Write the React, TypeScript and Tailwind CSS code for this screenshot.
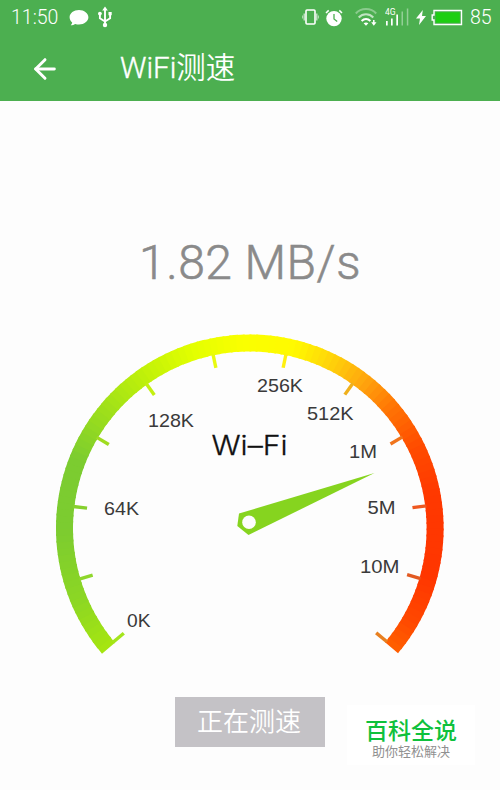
import { ArrowLeft } from 'lucide-react';

const CX = 249.8;
const CY = 528.3;
const START = 139.7;
const SWEEP = 260.4;

// [degrees along the dial, r, g, b]
const stops = [
  [0, 166, 230, 16],
  [18, 140, 214, 36],
  [40, 124, 204, 48],
  [62, 124, 204, 48],
  [76, 152, 220, 30],
  [95, 190, 240, 10],
  [112, 226, 255, 0],
  [128, 250, 255, 0],
  [144, 255, 250, 0],
  [156, 255, 212, 10],
  [168, 255, 166, 14],
  [180, 255, 116, 4],
  [194, 255, 76, 0],
  [210, 255, 56, 0],
  [235, 255, 54, 0],
  [250, 255, 72, 0],
  [261, 255, 98, 0],
];

const colorAt = (deg: number) => {
  let i = 0;
  while (i < stops.length - 2 && deg > stops[i + 1][0]) i++;
  const a = stops[i];
  const b = stops[i + 1];
  const t = Math.min(1, Math.max(0, (deg - a[0]) / (b[0] - a[0])));
  const c = [1, 2, 3].map((k) => Math.round(a[k] + (b[k] - a[k]) * t));
  return `rgb(${c.join(',')})`;
};

const point = (r: number, deg: number) => {
  const rad = ((START + deg) * Math.PI) / 180;
  return [CX + r * Math.cos(rad), CY + r * Math.sin(rad)];
};

const arc = (from: number, to: number) => {
  const [x1, y1] = point(185.3, from);
  const [x2, y2] = point(185.3, to);
  return `M${x1} ${y1}A185.3 185.3 0 0 1 ${x2} ${y2}`;
};

const segments = Array.from({ length: 130 }, (_, i) => i * (SWEEP / 130));

const tickColors = [
  '#a4e51c', '#8fd72c', '#86d02e', '#a0dc20', '#c4f010', '#e8fa10',
  '#fff010', '#efb01c', '#f0741c', '#ee5820', '#e25a22', '#e88020',
];

const labels = [
  { text: '0K', x: 127, y: 627, w: 23.5 },
  { text: '64K', x: 104, y: 515.3, w: 35 },
  { text: '128K', x: 148, y: 426.5, w: 46 },
  { text: '256K', x: 257, y: 391.5, w: 46 },
  { text: '512K', x: 307, y: 420, w: 46.5 },
  { text: '1M', x: 349, y: 458, w: 28 },
  { text: '5M', x: 367.5, y: 514, w: 28 },
  { text: '10M', x: 360, y: 573, w: 39.5 },
];

const Gauge = () => (
  <svg viewBox="40 320 420 350" className="h-[350px] w-[420px]">
    {segments.map((d) => (
      <path
        key={d}
        d={arc(d, Math.min(SWEEP, d + 2.6))}
        stroke={colorAt(d + 1)}
        strokeWidth="17"
        fill="none"
      />
    ))}
    {tickColors.map((color, i) => {
      const deg = i === 0 ? 0.5 : i === 11 ? SWEEP - 0.5 : i * (SWEEP / 11);
      const [x1, y1] = point(178, deg);
      const [x2, y2] = point(164, deg);
      return <path key={i} d={`M${x1} ${y1}L${x2} ${y2}`} stroke={color} strokeWidth="3.4" />;
    })}
    {labels.map((l) => (
      <text
        key={l.text}
        x={l.x}
        y={l.y}
        textLength={l.w}
        lengthAdjust="spacingAndGlyphs"
        className="fill-[#3a3a3a] font-['Liberation_Sans',sans-serif] text-[18.5px]"
      >
        {l.text}
      </text>
    ))}
    <text
      x="211.5"
      y="455"
      textLength="76"
      lengthAdjust="spacingAndGlyphs"
      className="fill-[#111] stroke-[#111] stroke-[0.3px] font-['Inter','Liberation_Sans',sans-serif] text-[27px] font-light"
    >
      Wi–Fi
    </text>
    <path d="M374.5 473L239 513.5L237.300 526L248.5 535Z" fill="#86d41f" />
    <circle cx="249" cy="522.3" r="6.8" fill="#fdfdfd" />
  </svg>
);

const StatusBar = () => (
  <div className="flex h-9 items-center justify-between pl-[11px] pr-2 text-[19.5px] font-light text-white">
    <div className="flex items-center">
      <span className="w-[58px]">11:50</span>
      <svg viewBox="0 0 20 17" className="-mt-0.5 h-[17px] w-5" fill="white">
        <path d="M10 1C4.800 1 .6 4.200.6 8.300c0 2.200 1.100 4 2.600 5.200-.1 1-.7 1.800-1.500 2.700 1.800 0 3.300-.5 4.500-1.300 1.200.4 2.500.6 3.800.6 5.200 0 9.400-3.200 9.400-7.200S15.200 1 10 1Z" />
      </svg>
      <svg viewBox="0 0 16 22" className="-mt-0.5 ml-2 h-[22px] w-4" fill="none" stroke="white" strokeWidth="1.900">
        <path d="M8 3v16M2.900 8v4.300L8 15.500M13.100 7v5.300L8 15.500" />
        <path d="M8 .5 10.800 4.500H5.200ZM11.500 6h3.200v3.200h-3.200Z" fill="white" stroke="none" />
        <circle cx="2.900" cy="7.600" r="1.900" fill="white" stroke="none" />
        <circle cx="8" cy="19" r="2.200" fill="white" stroke="none" />
      </svg>
    </div>
    <div className="flex items-center">
      <svg viewBox="0 0 17 18" className="-mt-0.5 h-[18px] w-[17px]" fill="none" stroke="white">
        <rect x="4" y="2" width="9" height="14" rx="1" strokeWidth="1.600" />
        <path d="M2.200 5.500v7M14.800 5.500v7" strokeWidth="1.200" opacity=".8" />
        <path d="M.6 7.500v3M16.400 7.500v3" strokeWidth="1" opacity=".6" />
      </svg>
      <svg viewBox="0 0 18 18" className="ml-1.5 h-[18px] w-[18px]">
        <circle cx="9" cy="9.600" r="7.700" fill="white" />
        <path d="M1 4 3.700 1.400M17 4 14.300 1.400" stroke="white" strokeWidth="1.500" />
        <path d="M9 5v5l3.200 2.600" fill="none" stroke="#4CAF50" strokeWidth="1.300" />
      </svg>
      <svg viewBox="0 0 22 20" className="-mt-0.5 ml-3 h-5 w-[22px]" fill="none" stroke="white" strokeWidth="2">
        <path d="M.8 6.500C6 .6 16 .6 21.200 6.500" opacity=".35" />
        <path d="M3.700 10.500c4.200-4.200 10.400-4.200 14.600 0" opacity=".65" />
        <path d="M6.600 14c2.600-2.600 6.200-2.600 8.800 0" />
        <path d="m8.600 16.300 2.400 2.400 2.400-2.400c-1.400-1.200-3.400-1.200-4.800 0Z" fill="white" stroke="none" />
        <path d="M18.800 13v4" strokeWidth="1.500" />
        <path d="M16.200 15.300h5.300l-2.700 3.500Z" fill="white" stroke="none" />
      </svg>
      <svg viewBox="0 0 26 20" className="-mt-0.5 ml-2 h-5 w-[26px]" fill="white">
        <text x="0" y="7.500" className="font-[Roboto,sans-serif] text-[8.5px] font-normal">4G</text>
        <path d="M1 14h1.700v4.500H1ZM6 11.500h1.700v7H6ZM11.300 7.500H13v11h-1.700Z" />
        <path d="M16.500 4.500h1.500v14h-1.500ZM21.800 1.500h1.500v17h-1.500Z" opacity=".4" />
      </svg>
      <svg viewBox="0 0 10 15" className="-mt-0.5 ml-[5px] h-[15px] w-2.5" fill="white">
        <path d="M6.800 0 0 8.500h4L3 15l7-9H6Z" />
      </svg>
      <svg viewBox="0 0 32 17" className="-mt-0.5 ml-[5px] h-[17px] w-8" fill="none">
        <path d="M3 1.500h27.500v14H3V11H1.200V6H3Z" stroke="white" strokeWidth="1.400" />
        <rect x="4.800" y="3.300" width="24" height="10.400" fill="#1dce12" />
      </svg>
      <span className="ml-[7px] w-[22px]">85</span>
    </div>
  </div>
);

const App = () => {
  return (
    <div className="relative flex h-[790px] w-[500px] flex-col items-center overflow-hidden bg-[#fdfdfd] font-[Roboto,'Noto_Sans_CJK_SC',sans-serif]">
      <header className="h-[101px] w-full bg-[#4caf50]">
        <StatusBar />
        <div className="flex h-[65px] items-center pl-[29px] text-white">
          <ArrowLeft size={32} strokeWidth={2.2} />
          <h1 className="ml-[59px] text-[29.5px] font-[350] leading-none">
            <span className="[-webkit-text-stroke:0.4px_white]">WiFi</span>测速
          </h1>
        </div>
      </header>

      <p className="mt-[133px] text-[48px] font-light leading-[58px] tracking-[0.5px] text-[#8a8a8a] [-webkit-text-stroke:0.6px_#8a8a8a]">
        1.82 MB/s
      </p>

      <div className="mt-7">
        <Gauge />
      </div>

      <button className="mt-[27px] h-[50px] w-[150px] bg-[#c4c2c6] pr-0.5 text-[26px] font-[350] leading-none text-white">
        正在测速
      </button>

      {/* Watermark */}
      <div className="absolute left-[347px] top-[705px] flex h-[60px] w-[128px] flex-col items-center bg-white pt-3">
        <span className="pt-0.5 text-[23px] font-medium leading-[26px] text-[#0fc13c]">百科全说</span>
        <span className="-mt-px text-[13px] leading-4 text-[#909090]">助你轻松解决</span>
      </div>
    </div>
  );
};

export default App;
